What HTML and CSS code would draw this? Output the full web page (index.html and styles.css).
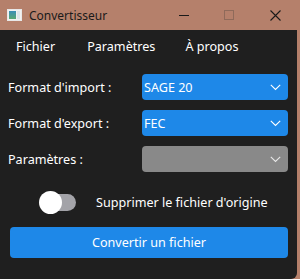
FILE: index.html
```html
<!DOCTYPE html>
<html lang="fr">
<head>
<meta charset="utf-8">
<link rel="stylesheet" href="styles.css">
</head>
<body>
<div class="window">
  <div class="titlebar">
    <div class="app-icon"><span class="ic-a"></span><span class="ic-b"></span></div>
    <div class="title">Convertisseur</div>
    <div class="controls">
      <span class="ctl min"></span>
      <span class="ctl max"></span>
      <svg class="ctl close" width="11" height="11" viewBox="0 0 11 11"><path d="M0.5 0.5 L10.5 10.5 M10.5 0.5 L0.5 10.5" stroke="#1a1a1a" stroke-width="1.1"/></svg>
    </div>
  </div>
  <div class="content">
    <nav class="menu">
      <span class="menu-item m1">Fichier</span>
      <span class="menu-item m2">Paramètres</span>
      <span class="menu-item m3">À propos</span>
    </nav>
    <div class="form">
      <label class="label">Format d'import :</label>
      <div class="combo blue"><span>SAGE 20</span><svg class="chev" width="11" height="7" viewBox="0 0 11 7"><path d="M0.8 0.8 L5.5 5.5 L10.2 0.8" fill="none" stroke="#ffffff" stroke-width="1.1"/></svg></div>
      <label class="label">Format d'export :</label>
      <div class="combo blue"><span>FEC</span><svg class="chev" width="11" height="7" viewBox="0 0 11 7"><path d="M0.8 0.8 L5.5 5.5 L10.2 0.8" fill="none" stroke="#ffffff" stroke-width="1.1"/></svg></div>
      <label class="label">Paramètres :</label>
      <div class="combo grey"><span></span><svg class="chev" width="11" height="7" viewBox="0 0 11 7"><path d="M0.8 0.8 L5.5 5.5 L10.2 0.8" fill="none" stroke="#e8e8e8" stroke-width="1.1"/></svg></div>
    </div>
    <div class="toggle-row">
      <div class="toggle"><span class="track"></span><span class="knob"></span></div>
      <span class="toggle-label">Supprimer le fichier d'origine</span>
    </div>
    <button class="convert">Convertir un fichier</button>
  </div>
</div>
</body>
</html>
```
FILE: styles.css
```css
* { box-sizing: border-box; }
html, body {
  margin: 0;
  padding: 0;
  width: 300px;
  height: 279px;
  overflow: hidden;
  background: #b5806b;
  font-family: "Noto Sans", "Open Sans", sans-serif;
}
.window {
  width: 300px;
  height: 279px;
  display: flex;
  flex-direction: column;
}
.titlebar {
  height: 30px;
  background: #b5806b;
  display: flex;
  align-items: center;
  padding-left: 7px;
}
.app-icon {
  width: 15px;
  height: 12px;
  border: 1px solid #e8e8e8;
  background: #f2f2f2;
  display: flex;
  padding: 1px;
  gap: 1px;
}
.ic-a { flex: 0 0 7px; background: linear-gradient(#3c8fb8, #5aa872); }
.ic-b { flex: 1; background: #dfe6ea; }
.title {
  margin-left: 7px;
  font-size: 12px;
  color: #1a1a1a;
}
.controls {
  margin-left: auto;
  display: flex;
  align-items: center;
  height: 30px;
}
.ctl { display: block; }
.min {
  width: 10px;
  height: 1px;
  background: #1a1a1a;
  margin-right: 35px;
}
.max {
  width: 10px;
  height: 10px;
  border: 1px solid #8f6a5a;
  margin-right: 36px;
}
.close { margin-right: 19px; }
.content {
  flex: 1;
  background: #1f1f1f;
  margin-right: 3px;
  border-bottom-right-radius: 6px;
  display: flex;
  flex-direction: column;
  font-size: 12.6px;
}
.menu {
  height: 32px;
  display: flex;
  align-items: center;
  color: #ffffff;
  padding-left: 16px;
}
.m2 { margin-left: 32px; }
.m3 { margin-left: 30px; }
.form {
  margin-top: 12px;
  display: grid;
  grid-template-columns: 134px 146px;
  row-gap: 10px;
  padding-left: 8px;
}
.label {
  color: #ffffff;
  display: flex;
  align-items: center;
  height: 26px;
}
.combo {
  height: 26px;
  border-radius: 4px;
  display: flex;
  align-items: center;
  justify-content: space-between;
  padding: 0 7px 0 2px;
  color: #ffffff;
}
.blue { background: #1e88e8; }
.grey { background: #898989; }
.chev { display: block; }
.toggle-row {
  margin-top: 18px;
  height: 24px;
  display: flex;
  align-items: center;
  padding-left: 39px;
}
.toggle {
  position: relative;
  width: 37px;
  height: 23px;
}
.track {
  position: absolute;
  left: 10px;
  top: 3px;
  width: 27px;
  height: 17px;
  border-radius: 9px;
  background: #a3a3a8;
}
.knob {
  position: absolute;
  left: 0;
  top: 0;
  width: 23px;
  height: 23px;
  border-radius: 50%;
  background: #ffffff;
}
.toggle-label {
  margin-left: 20px;
  color: #ffffff;
}
.convert {
  margin: 13px 0 0 10px;
  width: 278px;
  height: 31px;
  border: none;
  border-radius: 4px;
  background: #1e88e8;
  color: #ffffff;
  font-family: inherit;
  font-size: 12.6px;
  padding: 0;
}
```
